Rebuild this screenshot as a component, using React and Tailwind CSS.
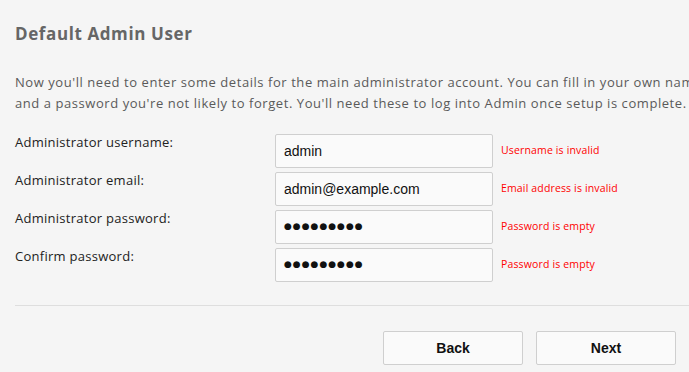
import React from "react";

const rows = [
  { label: "Administrator username:", value: "admin", err: "Username is invalid", type: "text" },
  { label: "Administrator email:", value: "admin@example.com", err: "Email address is invalid", type: "text" },
  { label: "Administrator password:", value: "●●●●●●●●●", err: "Password is empty", type: "pw" },
  { label: "Confirm password:", value: "●●●●●●●●●", err: "Password is empty", type: "pw" },
];

export default function App() {
  return (
    <div className="w-[689px] h-[372px] overflow-hidden bg-[#f5f5f5] pl-[15px] pt-[22px] text-[#555]" style={{ fontFamily: '"Open Sans", sans-serif' }}>
      <h1 className="text-[17px] font-bold leading-[24px] tracking-[0.6px] text-[#666]">Default Admin User</h1>
      <p className="mt-[26px] text-[13px] leading-[21px] tracking-[0.56px] whitespace-nowrap text-[#5a5a5a]">
        Now you'll need to enter some details for the main administrator account. You can fill in your own name here
        <br />
        and a password you're not likely to forget. You'll need these to log into Admin once setup is complete.
      </p>
      <div className="mt-[20px] flex flex-col gap-[4px]">
        {rows.map((r) => (
          <div key={r.label} className="flex items-start h-[34px]">
            <div className="w-[260px] text-[13px] leading-[17px] tracking-[0.27px] text-[#222]">{r.label}</div>
            <div className="w-[218px] h-[34px] border border-[#cfcfcf] rounded-[2px] bg-[#fafafa] flex items-center pl-[8px]">
              {r.type === "pw" ? (
                <span className="text-[9px] tracking-[1px] text-[#111]" style={{ fontFamily: '"DejaVu Sans", sans-serif' }}>{r.value}</span>
              ) : (
                <span className="text-[14px] text-[#111]" style={{ fontFamily: '"Liberation Sans", Arial, sans-serif' }}>{r.value}</span>
              )}
            </div>
            <div className="ml-[8px] h-[34px] flex items-center text-[10.5px] tracking-[0.15px] text-[#ff0000]">{r.err}</div>
          </div>
        ))}
      </div>
      <div className="mt-[23px] h-px bg-[#dedede]"></div>
      <div className="mt-[25px] flex justify-end gap-[13px] pr-[13px]">
        <button className="w-[140px] h-[34px] border border-[#cfcfcf] rounded-[2px] bg-[#fafafa] text-[14px] font-bold text-[#111]" style={{ fontFamily: '"Liberation Sans", Arial, sans-serif' }}>Back</button>
        <button className="w-[140px] h-[34px] border border-[#cfcfcf] rounded-[2px] bg-[#fafafa] text-[14px] font-bold text-[#111]" style={{ fontFamily: '"Liberation Sans", Arial, sans-serif' }}>Next</button>
      </div>
    </div>
  );
}
